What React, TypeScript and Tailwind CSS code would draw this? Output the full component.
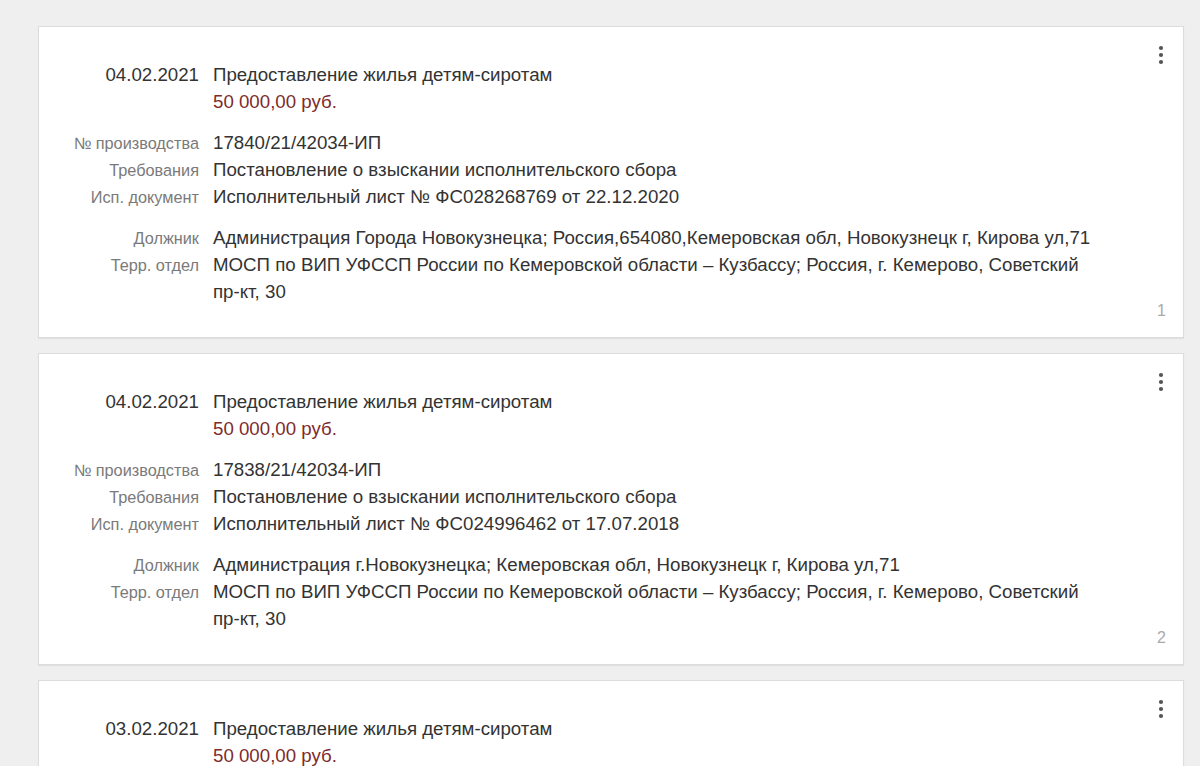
import React from "react";

type Row = { label: string; value: React.ReactNode };

type Item = {
  date: string;
  title: string;
  amount: string;
  groups: Row[][];
  index: number;
};

const ADDRESS = (
  <>
    МОСП по ВИП УФССП России по Кемеровской области – Кузбассу; Россия, г. Кемерово, Советский{" "}
    <span className="whitespace-nowrap">пр-кт, 30</span>
  </>
);

const items: Item[] = [
  {
    date: "04.02.2021",
    title: "Предоставление жилья детям-сиротам",
    amount: "50 000,00 руб.",
    index: 1,
    groups: [
      [
        { label: "№ производства", value: "17840/21/42034-ИП" },
        { label: "Требования", value: "Постановление о взыскании исполнительского сбора" },
        { label: "Исп. документ", value: "Исполнительный лист № ФС028268769 от 22.12.2020" },
      ],
      [
        {
          label: "Должник",
          value:
            "Администрация Города Новокузнецка; Россия,654080,Кемеровская обл, Новокузнецк г, Кирова ул,71",
        },
        { label: "Терр. отдел", value: ADDRESS },
      ],
    ],
  },
  {
    date: "04.02.2021",
    title: "Предоставление жилья детям-сиротам",
    amount: "50 000,00 руб.",
    index: 2,
    groups: [
      [
        { label: "№ производства", value: "17838/21/42034-ИП" },
        { label: "Требования", value: "Постановление о взыскании исполнительского сбора" },
        { label: "Исп. документ", value: "Исполнительный лист № ФС024996462 от 17.07.2018" },
      ],
      [
        {
          label: "Должник",
          value: "Администрация г.Новокузнецка; Кемеровская обл, Новокузнецк г, Кирова ул,71",
        },
        { label: "Терр. отдел", value: ADDRESS },
      ],
    ],
  },
  {
    date: "03.02.2021",
    title: "Предоставление жилья детям-сиротам",
    amount: "50 000,00 руб.",
    index: 3,
    groups: [
      [
        { label: "№ производства", value: "17836/21/42034-ИП" },
        { label: "Требования", value: "Постановление о взыскании исполнительского сбора" },
        { label: "Исп. документ", value: "Исполнительный лист № ФС024996458 от 17.07.2018" },
      ],
      [
        {
          label: "Должник",
          value: "Администрация г.Новокузнецка; Кемеровская обл, Новокузнецк г, Кирова ул,71",
        },
        { label: "Терр. отдел", value: ADDRESS },
      ],
    ],
  },
];

const MoreIcon = () => (
  <svg width="6" height="20" viewBox="0 0 6 20" fill="#555">
    <circle cx="3" cy="3" r="2.1" />
    <circle cx="3" cy="10" r="2.1" />
    <circle cx="3" cy="17" r="2.1" />
  </svg>
);

const Card = ({ item }: { item: Item }) => {
  return (
    <div className="relative bg-white border border-[#dcdcdc] shadow-[0_1px_1px_rgba(0,0,0,0.06)] pt-[34px] pb-[32px]">
      <button className="absolute top-[14px] right-[15px] p-1">
        <MoreIcon />
      </button>

      <div className="grid grid-cols-[160px_905px] gap-x-[14px] items-baseline leading-[27px]">
        <div className="text-right text-[18.7px] text-[#333]">{item.date}</div>
        <div className="text-[18.7px] text-[#333]">{item.title}</div>
        <div />
        <div className="text-[18.7px] text-[#7e2b2b]">{item.amount}</div>

        {item.groups.map((group, gi) => (
          <React.Fragment key={gi}>
            {group.map((row, ri) => (
              <React.Fragment key={ri}>
                <div
                  className={
                    "text-right text-[16.3px] leading-[20px] text-[#7a7a7a] " +
                    (ri === 0 ? "mt-[14px]" : "")
                  }
                >
                  {row.label}
                </div>
                <div className={"text-[18.7px] text-[#333] " + (ri === 0 ? "mt-[14px]" : "")}>
                  {row.value}
                </div>
              </React.Fragment>
            ))}
          </React.Fragment>
        ))}
      </div>

      <div className="absolute right-[17px] bottom-[14px] text-[16px] text-[#aaa]">{item.index}</div>
    </div>
  );
};

export default function App() {
  return (
    <div
      className="min-h-screen bg-[#efefef] pl-[38px] pr-[16px] pt-[26px] pb-8 flex flex-col gap-[15px]"
      style={{ fontFamily: '"Liberation Sans", Arial, sans-serif' }}
    >
      {items.map((item) => (
        <Card key={item.index} item={item} />
      ))}
    </div>
  );
}
